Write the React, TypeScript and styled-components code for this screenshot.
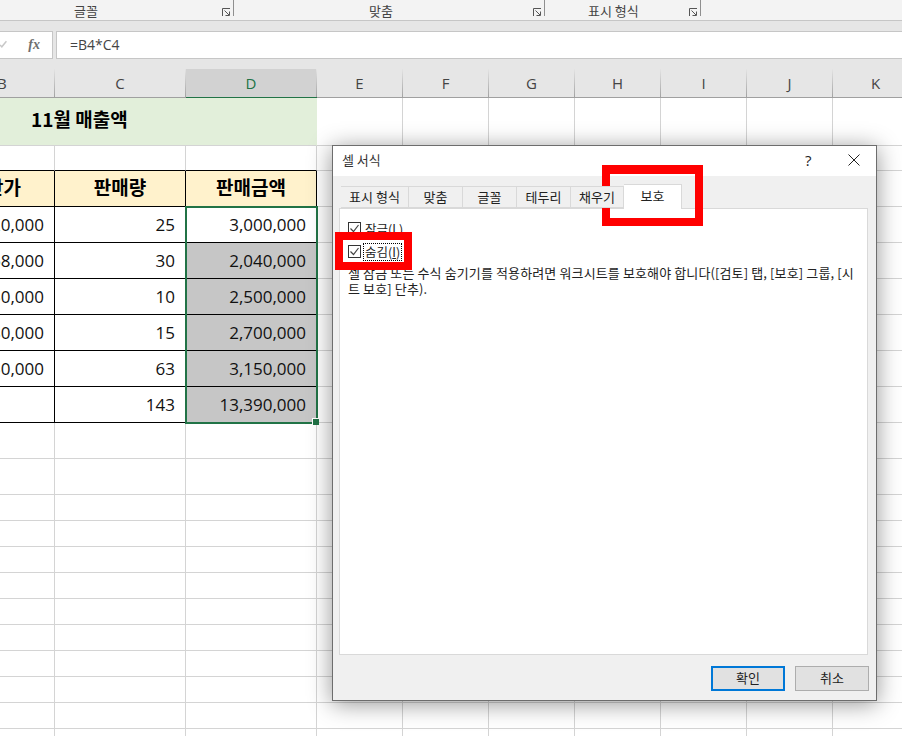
import * as React from "react";
import styled, { createGlobalStyle } from "styled-components";

const KO = `"Noto Sans CJK KR", "Open Sans", sans-serif`;
const LATIN = `"Open Sans", "Noto Sans CJK KR", sans-serif`;
const GRID_LINE = "#d4d4d4";

const GlobalStyle = createGlobalStyle`
  html, body {
    margin: 0;
    padding: 0;
    background: #fff;
  }
`;

const Page = styled.div`
  position: relative;
  width: 902px;
  height: 736px;
  overflow: hidden;
  font-family: ${KO};
  background: #fff;
`;

/* ribbon */
const Ribbon = styled.div`
  display: grid;
  grid-template-columns: 234px 311px 156px 1fr;
  height: 20px;
  background: #f3f3f3;
  border-bottom: 1px solid #c6c6c6;
  box-sizing: content-box;
`;

const RibbonGroup = styled.div<{ $indent: number }>`
  position: relative;
  height: 16px;
  padding-left: ${(p) => p.$indent}px;
  border-right: 1px solid #8f8f8f;
  box-sizing: border-box;
  font-size: 13px;
  line-height: 21px;
  color: #444;
  white-space: nowrap;
`;

const LauncherBox = styled.svg`
  position: absolute;
  right: 2px;
  top: 8px;
`;

const Launcher = () => (
  <LauncherBox width="9" height="9" viewBox="0 0 9 9" fill="none" stroke="#555">
    <path d="M.5 8V.5H8" />
    <path d="M2.5 2.5L7 7M7.5 3.5v4h-4" />
  </LauncherBox>
);

/* formula bar */
const FormulaBar = styled.div`
  display: flex;
  gap: 3px;
  height: 48px;
  padding: 10px 0 10px;
  box-sizing: border-box;
  background: #e6e6e6;
`;

const FormulaTools = styled.div`
  display: flex;
  align-items: center;
  justify-content: flex-end;
  gap: 21px;
  width: 53px;
  padding-right: 12px;
  box-sizing: border-box;
  overflow: hidden;
  background: #fff;
  border: 1px solid #c6c6c6;
  border-left: none;
`;

const FxLabel = styled.span`
  font-family: "Liberation Serif", serif;
  font-style: italic;
  font-weight: 700;
  font-size: 14px;
  color: #6f6f6f;
`;

const FormulaInput = styled.div`
  flex: 1;
  padding-left: 13px;
  background: #fff;
  border: 1px solid #c6c6c6;
  border-right: none;
  font-family: ${LATIN};
  font-size: 14px;
  line-height: 25px;
  color: #444;
`;

/* sheet */
const COLS = "55px 131px 131px repeat(7, 86px)";

const HeaderRow = styled.div`
  display: grid;
  grid-template-columns: ${COLS};
  height: 29px;
  background: #e6e6e6;
  border-bottom: 1px solid #a0a0a0;
  box-sizing: border-box;
`;

const ColHeader = styled.div<{ $active?: boolean }>`
  display: flex;
  align-items: center;
  justify-content: center;
  border-right: 1px solid transparent;
  border-image: linear-gradient(#e6e6e6, #a0a0a0) 1;
  font-family: ${LATIN};
  font-size: 15px;
  color: ${(p) => (p.$active ? "#217346" : "#444")};
  background: ${(p) => (p.$active ? "#d2d2d2" : "transparent")};
  box-shadow: ${(p) => (p.$active ? "0 1.5px 0 #217346" : "none")};
`;

const CroppedColHeader = styled(ColHeader)`
  justify-content: flex-start;
  text-indent: -3px;
  overflow: hidden;
`;

const Sheet = styled.div`
  position: relative;
`;

const Row = styled.div<{ $height: number }>`
  display: grid;
  grid-template-columns: ${COLS};
  height: ${(p) => p.$height}px;
`;

const Cell = styled.div<{ $right?: boolean; $bottom?: boolean }>`
  display: flex;
  align-items: center;
  overflow: hidden;
  box-sizing: border-box;
  border-right: 1px solid ${(p) => (p.$right ? "#000" : GRID_LINE)};
  border-bottom: 1px solid ${(p) => (p.$bottom ? "#000" : GRID_LINE)};
`;

const TitleCell = styled(Cell)`
  grid-column: 1 / span 3;
  padding: 0 0 7px 31px;
  background: #e2efda;
  border-right-color: #e2efda;
  font-family: "Noto Sans CJK KR", sans-serif;
  font-size: 19px;
  font-weight: 700;
  color: #000;
`;

const HeadCell = styled(Cell)<{ $offset?: number }>`
  justify-content: ${(p) => (p.$offset ? "flex-end" : "center")};
  padding-right: ${(p) => p.$offset ?? 0}px;
  padding-bottom: 5px;
  background: #fff2cc;
  font-size: 19px;
  font-weight: 700;
  color: #000;
  white-space: nowrap;
`;

const NumCell = styled(Cell)<{ $shaded?: boolean }>`
  justify-content: flex-end;
  padding-right: 10px;
  background: ${(p) => (p.$shaded ? "#c6c6c6" : "#fff")};
  font-family: ${LATIN};
  font-size: 17px;
  color: #111;
  white-space: nowrap;
`;

const SelectionBox = styled.div`
  position: absolute;
  left: 185px;
  top: 108px;
  width: 133px;
  height: 218px;
  box-sizing: border-box;
  border: 2px solid #217346;
  pointer-events: none;
`;

const FillHandle = styled.div`
  position: absolute;
  right: -3px;
  bottom: -3px;
  width: 6px;
  height: 6px;
  background: #217346;
  border: 1px solid #fff;
  border-width: 1px 0 0 1px;
`;

/* dialog */
const Dialog = styled.div`
  position: absolute;
  left: 332px;
  top: 145px;
  width: 545px;
  height: 556px;
  box-sizing: border-box;
  display: flex;
  flex-direction: column;
  background: #f0f0f0;
  border: 1px solid #6d6d6d;
  box-shadow: 0 3px 22px rgba(0, 0, 0, 0.42);
`;

const TitleBar = styled.div`
  display: flex;
  align-items: center;
  height: 30px;
  padding: 0 0 3px 9px;
  box-sizing: border-box;
  flex-shrink: 0;
  background: #fff;
  font-size: 13px;
  color: #333;
`;

const TitleText = styled.span`
  flex: 1;
`;

const HelpMark = styled.span`
  width: 43px;
  font-family: ${LATIN};
  font-size: 15px;
  color: #222;
`;

const CloseIcon = styled.svg`
  margin-right: 16px;
`;

const DialogBody = styled.div`
  flex: 1;
  display: flex;
  flex-direction: column;
  padding: 10px 8px 0 6px;
  min-height: 0;
`;

const TabStrip = styled.div`
  display: flex;
  align-items: flex-end;
  height: 22px;
  padding-left: 2px;
  position: relative;
  z-index: 1;
`;

const Tab = styled.div<{ $width: number; $active?: boolean }>`
  width: ${(p) => p.$width}px;
  height: ${(p) => (p.$active ? 25 : 22)}px;
  margin-bottom: ${(p) => (p.$active ? -1 : 0)}px;
  box-sizing: border-box;
  text-align: center;
  font-size: 13px;
  line-height: ${(p) => (p.$active ? 22 : 20)}px;
  color: #222;
  background: ${(p) => (p.$active ? "#fff" : "#f0f0f0")};
  border: 1px solid #d9d9d9;
  border-left: none;
  border-bottom: ${(p) => (p.$active ? "none" : "1px solid #d9d9d9")};
`;

const Panel = styled.div`
  height: 447px;
  padding: 13px 9px 0 8px;
  box-sizing: border-box;
  background: #fff;
  border: 1px solid #d9d9d9;
`;

const CheckRow = styled.div`
  display: flex;
  align-items: center;
  gap: 3px;
  height: 23px;
  margin-top: -5px;
  margin-bottom: 5px;
  font-size: 12.5px;
  color: #222;
`;

const CheckLabel = styled.span<{ $focused?: boolean }>`
  padding: 0 1px;
  line-height: 16px;
  outline: ${(p) => (p.$focused ? "1px dotted #000" : "none")};
`;

const Description = styled.p`
  margin: -3px 0 0;
  font-size: 13px;
  letter-spacing: 0.12px;
  line-height: 16px;
  color: #222;
  word-break: break-all;
`;

const DialogFooter = styled.div`
  display: flex;
  justify-content: flex-end;
  align-items: flex-start;
  gap: 10px;
  padding-top: 11px;
  margin-right: -1px;
`;

const Button = styled.div<{ $primary?: boolean }>`
  width: 74px;
  height: 25px;
  box-sizing: border-box;
  text-align: center;
  font-size: 13px;
  line-height: ${(p) => (p.$primary ? 20 : 22)}px;
  color: #222;
  background: #e1e1e1;
  border: ${(p) => (p.$primary ? "2px solid #0078d7" : "1px solid #adadad")};
`;

const TabHighlight = styled.div`
  position: absolute;
  left: 602px;
  top: 165px;
  width: 101px;
  height: 61px;
  box-sizing: border-box;
  border: 8px solid #ff0000;
  border-top-width: 9px;
`;

const CheckHighlight = styled.div`
  position: absolute;
  left: 335px;
  top: 232px;
  width: 77px;
  height: 38px;
  box-sizing: border-box;
  border: 8px solid #ff0000;
`;

const CheckBox = () => (
  <svg width="13" height="13" viewBox="0 0 13 13" fill="none">
    <rect x=".5" y=".5" width="12" height="12" stroke="#333" />
    <path d="M2.5 6.5l3 3 5-6.5" stroke="#444" strokeWidth="1.2" />
  </svg>
);

const columns = ["C", "D", "E", "F", "G", "H", "I", "J", "K"];

const data = [
  { price: "120,000", qty: "25", total: "3,000,000", shaded: false },
  { price: "68,000", qty: "30", total: "2,040,000", shaded: true },
  { price: "250,000", qty: "10", total: "2,500,000", shaded: true },
  { price: "180,000", qty: "15", total: "2,700,000", shaded: true },
  { price: "50,000", qty: "63", total: "3,150,000", shaded: true },
  { price: "", qty: "143", total: "13,390,000", shaded: true },
];

const emptyHeights = [36, 36, 26, 26, 26, 26, 26, 26, 26, 26, 26, 26];

const BlankCells = ({ count }: { count: number }) => (
  <>
    {Array.from({ length: count }).map((_, i) => (
      <Cell key={i} />
    ))}
  </>
);

const tabs = [
  { label: "표시 형식", width: 68 },
  { label: "맞춤", width: 54 },
  { label: "글꼴", width: 54 },
  { label: "테두리", width: 54 },
  { label: "채우기", width: 53 },
];

const App: React.FC = () => {
  return (
    <Page>
      <GlobalStyle />
      <Ribbon>
        <RibbonGroup $indent={74}>
          글꼴
          <Launcher />
        </RibbonGroup>
        <RibbonGroup $indent={135}>
          맞춤
          <Launcher />
        </RibbonGroup>
        <RibbonGroup $indent={43}>
          표시 형식
          <Launcher />
        </RibbonGroup>
      </Ribbon>
      <FormulaBar>
        <FormulaTools>
          <svg width="8" height="10" viewBox="0 0 8 10" fill="none" stroke="#c8c8c8" strokeWidth="1.6">
            <path d="M0 5l2 2 5-6" />
          </svg>
          <FxLabel>fx</FxLabel>
        </FormulaTools>
        <FormulaInput>=B4*C4</FormulaInput>
      </FormulaBar>
      <HeaderRow>
        <CroppedColHeader>B</CroppedColHeader>
        {columns.map((c) => (
          <ColHeader key={c} $active={c === "D"}>
            {c}
          </ColHeader>
        ))}
      </HeaderRow>
      <Sheet>
        <Row $height={48}>
          <TitleCell>11월 매출액</TitleCell>
          <BlankCells count={7} />
        </Row>
        <Row $height={25}>
          <Cell $bottom />
          <Cell $bottom />
          <Cell $bottom />
          <BlankCells count={7} />
        </Row>
        <Row $height={36}>
          <HeadCell $right $bottom $offset={33}>
            단가
          </HeadCell>
          <HeadCell $right $bottom>
            판매량
          </HeadCell>
          <HeadCell $right $bottom>
            판매금액
          </HeadCell>
          <BlankCells count={7} />
        </Row>
        {data.map((row) => (
          <Row $height={36} key={row.total}>
            <NumCell $right $bottom>
              {row.price}
            </NumCell>
            <NumCell $right $bottom>
              {row.qty}
            </NumCell>
            <NumCell $right $bottom $shaded={row.shaded}>
              {row.total}
            </NumCell>
            <BlankCells count={7} />
          </Row>
        ))}
        {emptyHeights.map((h, i) => (
          <Row $height={h} key={i}>
            <BlankCells count={10} />
          </Row>
        ))}
        <SelectionBox>
          <FillHandle />
        </SelectionBox>
      </Sheet>

      <Dialog>
        <TitleBar>
          <TitleText>셀 서식</TitleText>
          <HelpMark>?</HelpMark>
          <CloseIcon width="12" height="12" viewBox="0 0 12 12" stroke="#222" fill="none">
            <path d="M.5.5l11 11M11.5.5l-11 11" />
          </CloseIcon>
        </TitleBar>
        <DialogBody>
          <TabStrip>
            {tabs.map((t) => (
              <Tab key={t.label} $width={t.width}>
                {t.label}
              </Tab>
            ))}
            <Tab $width={58} $active>
              보호
            </Tab>
          </TabStrip>
          <Panel>
            <CheckRow>
              <CheckBox />
              <CheckLabel>
                잠금(<u>L</u>)
              </CheckLabel>
            </CheckRow>
            <CheckRow>
              <CheckBox />
              <CheckLabel $focused>
                숨김(<u>I</u>)
              </CheckLabel>
            </CheckRow>
            <Description>
              셀 잠금 또는 수식 숨기기를 적용하려면 워크시트를 보호해야 합니다([검토] 탭, [보호] 그룹, [시트 보호] 단추).
            </Description>
          </Panel>
          <DialogFooter>
            <Button $primary>확인</Button>
            <Button>취소</Button>
          </DialogFooter>
        </DialogBody>
      </Dialog>
      <TabHighlight />
      <CheckHighlight />
    </Page>
  );
};

export default App;
